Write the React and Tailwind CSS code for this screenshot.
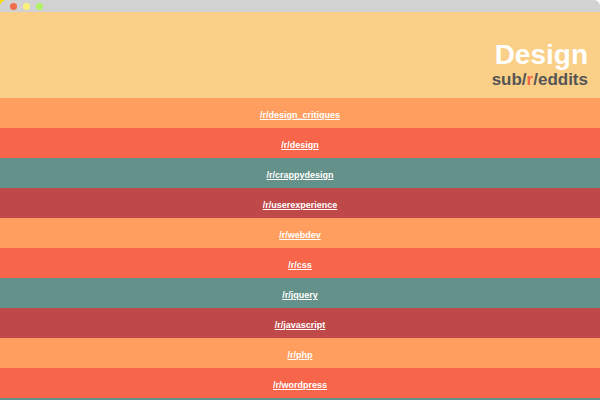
const rows = [
  { name: "design_critiques", color: "bg-[#ff9e5e]" },
  { name: "design", color: "bg-[#f7654a]" },
  { name: "crappydesign", color: "bg-[#649189]" },
  { name: "userexperience", color: "bg-[#bf4848]" },
  { name: "webdev", color: "bg-[#ff9e5e]" },
  { name: "css", color: "bg-[#f7654a]" },
  { name: "jquery", color: "bg-[#649189]" },
  { name: "javascript", color: "bg-[#bf4848]" },
  { name: "php", color: "bg-[#ff9e5e]" },
  { name: "wordpress", color: "bg-[#f7654a]" },
];

function WindowBar() {
  return (
    <div className="bg-[linear-gradient(90deg,#ffd900_8px,white_8px)]">
      <div className="flex h-3 items-center gap-[6px] rounded-t-[6px] bg-[#d2d2d2] pl-[10px]">
        <span className="size-[7px] rounded-full bg-[#ed6d4c]" />
        <span className="size-[7px] rounded-full bg-[#fcef7c]" />
        <span className="size-[7px] rounded-full bg-[#aff265]" />
      </div>
    </div>
  );
}

export default function App() {
  return (
    <div className="flex h-screen flex-col overflow-hidden bg-[#649189] font-['Liberation_Sans',Arial,sans-serif]">
      <WindowBar />
      <header className="bg-[#fad089] px-3 pt-[27px] pb-[9px] text-right">
        <h1 className="text-[28px] leading-8 font-bold text-white">Design</h1>
        <p className="text-[17px] leading-[18px] font-bold text-[#555555]">
          sub/<span className="text-[#f7654a]">r</span>/eddits
        </p>
      </header>
      <ul>
        {rows.map((row) => (
          <li key={row.name} className={`${row.color} pt-[11px] pb-[7px] text-center text-[9px] leading-3 font-bold text-white`}>
            <a href={`#${row.name}`} className="underline">
              /r/{row.name}
            </a>
          </li>
        ))}
      </ul>
    </div>
  );
}
